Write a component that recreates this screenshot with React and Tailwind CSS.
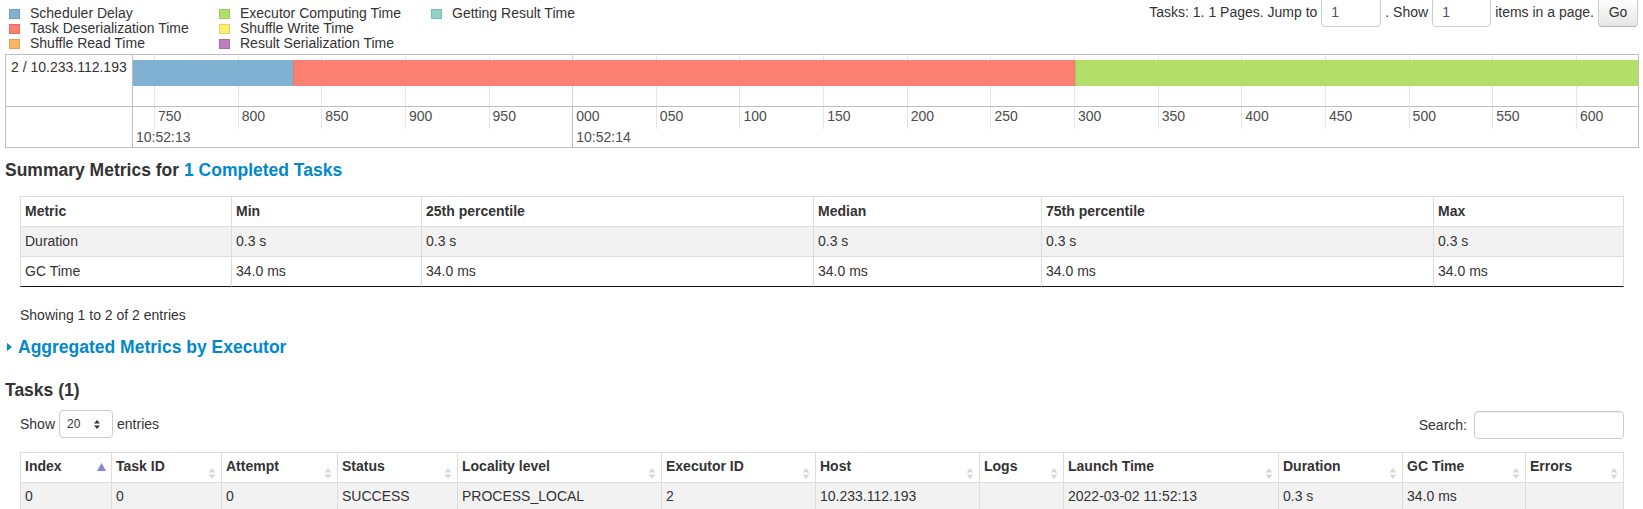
import React from "react";

const FONT = "font-['Liberation_Sans',Arial,Helvetica,sans-serif]";

const legendCols = [
  {
    w: "w-[210px]",
    items: [
      ["Scheduler Delay", "bg-[#80b1d3] border-[#6e9fc2]"],
      ["Task Deserialization Time", "bg-[#fb8072] border-[#e46f62]"],
      ["Shuffle Read Time", "bg-[#fdb462] border-[#e6a253]"],
    ],
  },
  {
    w: "w-[212px]",
    items: [
      ["Executor Computing Time", "bg-[#b3de69] border-[#9fc95a]"],
      ["Shuffle Write Time", "bg-[#ffed6f] border-[#e6d55f]"],
      ["Result Serialization Time", "bg-[#bc80bd] border-[#a66fa7]"],
    ],
  },
  {
    w: "w-[200px]",
    items: [["Getting Result Time", "bg-[#8dd3c7] border-[#7bbfb3]"]],
  },
];

const ticks = ["750", "800", "850", "900", "950", "000", "050", "100", "150", "200", "250", "300", "350", "400", "450", "500", "550", "600"];

function Legend() {
  return (
    <div className="flex pl-[9px] pt-[6px]">
      {legendCols.map((col, ci) => (
        <div key={ci} className={col.w}>
          {col.items.map(([label, cls]) => (
            <div key={label} className="flex h-[15px] items-center">
              <span className={`mt-[1px] h-[10px] w-[11px] shrink-0 border ${cls}`} />
              <span className="ml-[10px] whitespace-nowrap text-[14px] leading-[15px] text-[#333]">{label}</span>
            </div>
          ))}
        </div>
      ))}
    </div>
  );
}

function Pager() {
  return (
    <div className="-mt-[3px] flex h-[30px] items-center gap-[4px] whitespace-nowrap pr-[5px]">
      <span>Tasks: 1. 1 Pages. Jump to</span>
      <div className="flex h-[30px] w-[60px] items-center rounded-[4px] border border-[#ccc] pl-[9px] text-[#555] shadow-[inset_0_1px_1px_rgba(0,0,0,0.075)]">1</div>
      <span>. Show</span>
      <div className="flex h-[30px] w-[59px] items-center rounded-[4px] border border-[#ccc] pl-[9px] text-[#555] shadow-[inset_0_1px_1px_rgba(0,0,0,0.075)]">1</div>
      <span>items in a page.</span>
      <div className="flex h-[30px] w-[40px] items-center justify-center rounded-[4px] border border-[#ccc] border-b-[#b3b3b3] bg-gradient-to-b from-white to-[#e6e6e6] text-[#333]">Go</div>
    </div>
  );
}

function Timeline() {
  return (
    <div className="ml-[5px] mr-[4px] grid grid-cols-[127px_1fr] border border-[#bfbfbf]">
      <div className="h-[52px] whitespace-nowrap border-b border-r border-[#bfbfbf] pl-[5px] pt-[2px] text-[14px] leading-[20px] text-[#333]">
        2 / 10.233.112.193
      </div>
      <div className="relative h-[52px] overflow-hidden border-b border-[#bfbfbf]">
        <div className="absolute inset-0 flex">
          <div className="w-[21px] shrink-0" />
          {ticks.map((t, i) => (
            <div
              key={t}
              className={`h-full w-[83.65px] shrink-0 border-l ${i === 5 ? "border-[#d4d4d4]" : "border-[#e5e5e5]"}`}
            />
          ))}
        </div>
        <div className="relative mt-[5px] flex h-[26px]">
          <div className="w-[160px] bg-[#80b1d3]" />
          <div className="w-[782px] border-l border-[#e7776a] bg-[#fb8072]" />
          <div className="flex-1 border-l border-[#9dca5a] bg-[#b3de69]" />
        </div>
      </div>
      <div className="h-[40px] border-r border-[#bfbfbf]" />
      <div className="flex h-[40px] overflow-hidden text-[14px] leading-[16px] text-[#4d4d4d]">
        <div className="w-[21px] min-w-0 shrink-0 whitespace-nowrap pl-[3px] pt-[22px]">10:52:13</div>
        {ticks.map((t, i) =>
          i === 5 ? (
            <div key={t} className="w-[83.65px] min-w-0 shrink-0 whitespace-nowrap border-l border-[#bfbfbf] pl-[3px] pt-[1px]">
              <div className="h-[21px]">{t}</div>
              <div>10:52:14</div>
            </div>
          ) : (
            <div key={t} className="w-[83.65px] min-w-0 shrink-0">
              <div className="h-[22px] border-l border-[#e5e5e5] pl-[3px] pt-[1px]">{t}</div>
            </div>
          )
        )}
      </div>
    </div>
  );
}

const sumCols = "grid grid-cols-[211px_190px_392px_228px_392px_191px]";
const sumRows = [
  ["Duration", "0.3 s", "0.3 s", "0.3 s", "0.3 s", "0.3 s"],
  ["GC Time", "34.0 ms", "34.0 ms", "34.0 ms", "34.0 ms", "34.0 ms"],
];

function SummaryTable() {
  const head = ["Metric", "Min", "25th percentile", "Median", "75th percentile", "Max"];
  return (
    <div className="ml-[20px] mr-[19px] mt-[16px]">
      <div className={`${sumCols} h-[30px]`}>
        {head.map((h) => (
          <div key={h} className="border-l border-t border-[#ddd] pl-[4px] pt-[4px] font-bold last:border-r">{h}</div>
        ))}
      </div>
      <div className={`${sumCols} h-[30px] bg-[#f2f2f2]`}>
        {sumRows[0].map((c, i) => (
          <div key={i} className="border-l border-t border-[#ddd] pl-[4px] pt-[4px] last:border-r">{c}</div>
        ))}
      </div>
      <div className={`${sumCols} h-[31px]`}>
        {sumRows[1].map((c, i) => (
          <div key={i} className="border-b border-l border-t border-[#ddd] border-b-[#111] pl-[4px] pt-[4px] last:border-r">{c}</div>
        ))}
      </div>
    </div>
  );
}

function SortBoth() {
  return (
    <svg width="8" height="12" viewBox="0 0 8 12" className="mt-[15px] shrink-0 self-start">
      <polygon points="4,0 7.5,4.5 0.5,4.5" fill="#d9d9d9" />
      <polygon points="0.5,6.5 7.5,6.5 4,11" fill="#d9d9d9" />
    </svg>
  );
}

function SortAsc() {
  return (
    <svg width="9" height="8" viewBox="0 0 9 8" className="mt-[10px] shrink-0 self-start">
      <polygon points="4.5,0 9,8 0,8" fill="#8686dc" />
    </svg>
  );
}

const taskCols = "grid grid-cols-[91px_110px_116px_120px_204px_154px_164px_84px_215px_124px_123px_99px]";
const taskHead = ["Index", "Task ID", "Attempt", "Status", "Locality level", "Executor ID", "Host", "Logs", "Launch Time", "Duration", "GC Time", "Errors"];
const taskRow = ["0", "0", "0", "SUCCESS", "PROCESS_LOCAL", "2", "10.233.112.193", "", "2022-03-02 11:52:13", "0.3 s", "34.0 ms", ""];

function TasksTable() {
  return (
    <div className="ml-[20px] mr-[19px] mt-[13px]">
      <div className={`${taskCols} h-[30px]`}>
        {taskHead.map((h, i) => (
          <div key={h} className="flex justify-between border-l border-t border-[#ddd] pl-[4px] pr-[5px] font-bold last:border-r">
            <span className="mt-[3px] self-start whitespace-nowrap">{h}</span>
            {i === 0 ? <SortAsc /> : <SortBoth />}
          </div>
        ))}
      </div>
      <div className={`${taskCols} h-[30px] bg-[#f2f2f2]`}>
        {taskRow.map((c, i) => (
          <div key={i} className="whitespace-nowrap border-l border-t border-[#ddd] pl-[4px] pt-[3px] last:border-r">{c}</div>
        ))}
      </div>
    </div>
  );
}

export default function App() {
  return (
    <div className={`${FONT} h-[509px] w-[1643px] overflow-hidden bg-white text-[14px] leading-[20px] text-[#333]`}>
      <div className="flex h-[54px] justify-between">
        <Legend />
        <Pager />
      </div>
      <Timeline />
      <h4 className="ml-[5px] mt-[12px] text-[17.5px] font-bold leading-[20px]">
        Summary Metrics for <span className="text-[#0088cc]">1 Completed Tasks</span>
      </h4>
      <SummaryTable />
      <div className="ml-[20px] mt-[18px]">Showing 1 to 2 of 2 entries</div>
      <div className="mt-[12px] flex h-[20px] items-center">
        <svg width="5" height="8" viewBox="0 0 5 8" className="ml-[7px] shrink-0">
          <polygon points="0,0 5,4 0,8" fill="#0088cc" />
        </svg>
        <span className="ml-[6px] text-[17.5px] font-bold leading-[20px] text-[#0088cc]">Aggregated Metrics by Executor</span>
      </div>
      <h4 className="ml-[5px] mt-[23px] text-[17.5px] font-bold leading-[20px]">Tasks (1)</h4>
      <div className="mt-[10px] flex items-start justify-between pl-[20px] pr-[19px]">
        <div className="flex h-[28px] items-center">
          <span>Show</span>
          <div className="ml-[4px] flex h-[28px] w-[54px] items-center justify-between rounded-[4px] border border-[#ccc] pl-[7px] pr-[12px] text-[12px]">
            <span>20</span>
            <svg width="6" height="9" viewBox="0 0 6 9">
              <polygon points="3,0 6,3.5 0,3.5" fill="#333" />
              <polygon points="0,5.5 6,5.5 3,9" fill="#333" />
            </svg>
          </div>
          <span className="ml-[4px]">entries</span>
        </div>
        <div className="mt-[1px] flex h-[28px] items-center">
          <span>Search:</span>
          <div className="ml-[7px] h-[28px] w-[150px] rounded-[4px] border border-[#ccc] shadow-[inset_0_1px_1px_rgba(0,0,0,0.075)]" />
        </div>
      </div>
      <TasksTable />
    </div>
  );
}
